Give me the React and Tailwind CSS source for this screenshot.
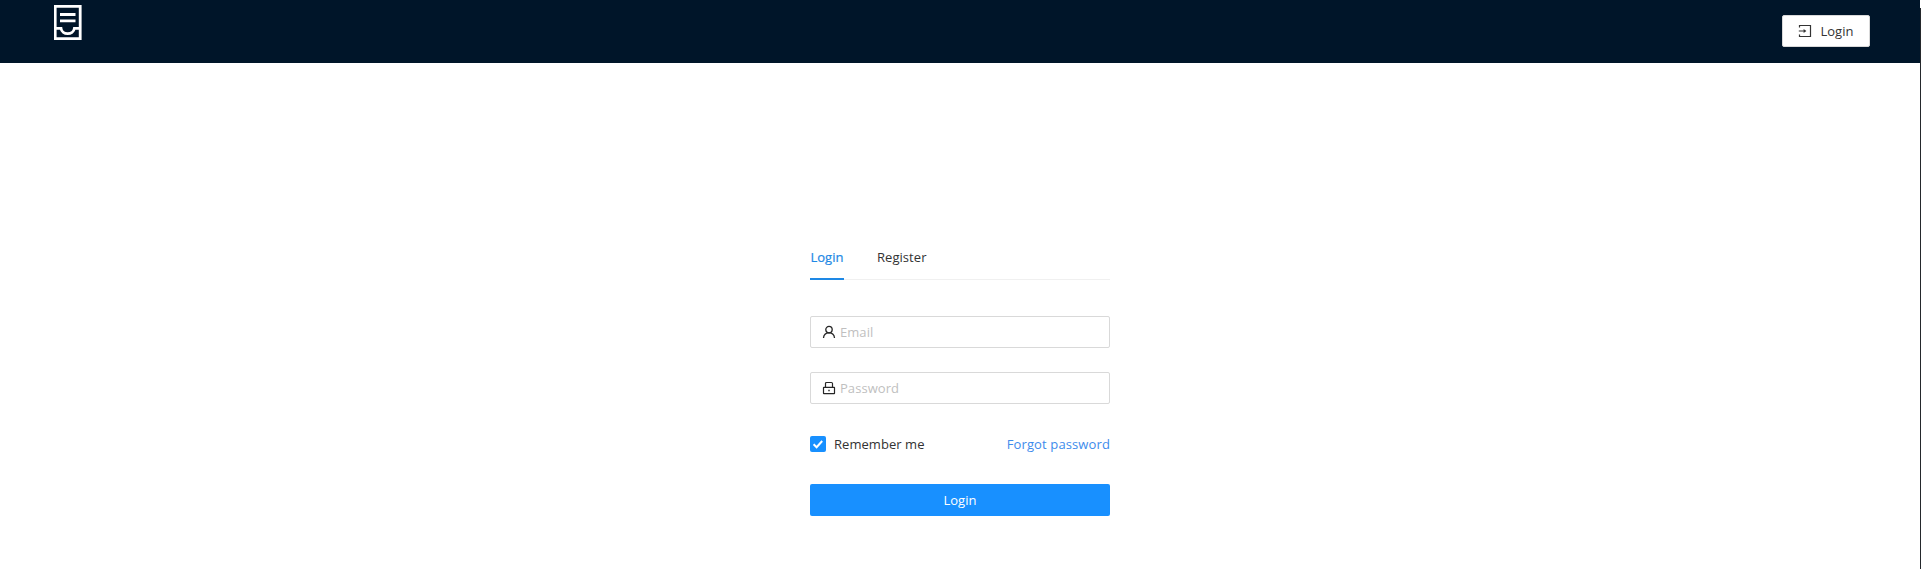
function Logo() {
  return (
    <svg className="mt-[5px] h-[35px] w-7" viewBox="0 0 28 35" fill="none" stroke="#fff" strokeWidth="2.8">
      <path d="M1.2 1.4H26.2V33.6H1.2ZM6 9.5H21.5M6 15.8H21.5M1.2 23.4H7C8 30.4 19.4 30.4 20.4 23.4H26.2" />
    </svg>
  );
}

function EnterIcon() {
  return (
    <svg className="size-3.5" viewBox="0 0 14 14" fill="none" stroke="currentColor" strokeWidth="1.2">
      <path d="M1.5 3.4V1.5H12.5V12.5H1.5V10.6M0.8 7H7" />
      <path d="M5.6 5L8.4 7L5.6 9Z" fill="currentColor" stroke="none" />
    </svg>
  );
}

function UserIcon() {
  return (
    <svg className="size-3.5" viewBox="0 0 14 14" fill="none" stroke="currentColor" strokeWidth="1.3">
      <circle cx="7" cy="4.6" r="3.2" />
      <path d="M1.5 13C1.7 10 3.8 7.8 7 7.8S12.3 10 12.5 13" />
    </svg>
  );
}

function LockIcon() {
  return (
    <svg className="size-3.5" viewBox="0 0 14 14" fill="none" stroke="currentColor" strokeWidth="1.2">
      <rect x="1.5" y="6.4" width="11" height="6.2" rx="0.4" />
      <path d="M3.5 6.4V2.6Q3.5 1.5 4.6 1.5H9.4Q10.5 1.5 10.5 2.6V6.4" />
      <path d="M7 8.8V10.2" strokeWidth="1.4" />
    </svg>
  );
}

function Field({ icon, type, placeholder }) {
  return (
    <label className="flex h-8 items-center gap-1 rounded-xs border border-[#d9d9d9] px-[11px] text-[#262626]">
      {icon}
      <input
        type={type}
        placeholder={placeholder}
        className="min-w-0 flex-1 bg-transparent outline-none placeholder:text-[#bfbfbf]"
      />
    </label>
  );
}

export default function App() {
  return (
    <div className="flex h-[569px] bg-white font-['Open_Sans','Noto_Sans',sans-serif] text-[13px] leading-[22px] tracking-[0.05px] text-[#333]">
      <div className="flex min-w-0 flex-1 flex-col">
        <header className="flex h-[63px] items-start justify-between bg-[#001529] pr-[50px] pl-[54px]">
          <Logo />
          <button className="mt-[15px] flex h-8 w-[88px] items-center justify-center gap-2 rounded-xs border border-[#d9d9d9] bg-white">
            <EnterIcon />
            <span>Login</span>
          </button>
        </header>
        <main className="mx-auto mt-[171px] w-[300px]">
          <nav className="flex h-[46px] gap-8 border-b border-[#f0f0f0]">
            <button className="h-[46px] w-[34px] border-b-2 border-[#1e88e5] pt-0.5 whitespace-nowrap text-[#1e88e5] [-webkit-text-stroke:0.2px]">
              Login
            </button>
            <button className="pl-px">Register</button>
          </nav>
          <form className="mt-9 flex flex-col gap-6">
            <Field icon={<UserIcon />} type="text" placeholder="Email" />
            <Field icon={<LockIcon />} type="password" placeholder="Password" />
            <div className="flex h-8 items-center justify-between">
              <label className="flex items-center gap-2">
                <span className="flex size-4 items-center justify-center rounded-xs bg-[#1890ff]">
                  <svg className="size-4" viewBox="0 0 16 16" fill="none" stroke="#fff" strokeWidth="2">
                    <path d="M3.6 8.2L6.6 11.2L12.2 5" />
                  </svg>
                </span>
                Remember me
              </label>
              <a className="tracking-[0.12px] text-[#3d8bec]">Forgot password</a>
            </div>
            <button type="button" className="h-8 rounded-xs bg-[#1890ff] text-white">
              Login
            </button>
          </form>
        </main>
      </div>
      <div className="mt-2 w-px bg-[#24282c]" />
    </div>
  );
}
